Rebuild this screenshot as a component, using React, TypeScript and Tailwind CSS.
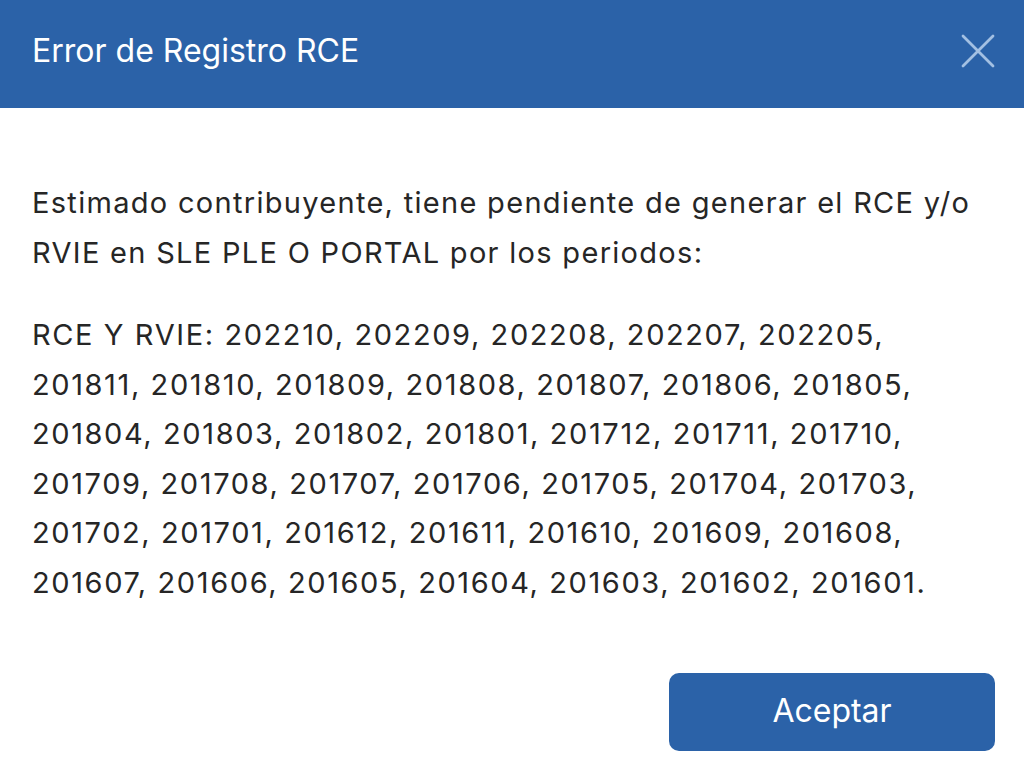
import React from 'react';

const periodLines = [
  'RCE Y RVIE: 202210, 202209, 202208, 202207, 202205,',
  '201811, 201810, 201809, 201808, 201807, 201806, 201805,',
  '201804, 201803, 201802, 201801, 201712, 201711, 201710,',
  '201709, 201708, 201707, 201706, 201705, 201704, 201703,',
  '201702, 201701, 201612, 201611, 201610, 201609, 201608,',
  '201607, 201606, 201605, 201604, 201603, 201602, 201601.',
];

export default function App() {
  return (
    <div className="w-[1024px] h-[771px] bg-white flex flex-col overflow-hidden font-['Inter','Roboto',sans-serif]">
      {/* Header */}
      <div className="h-[108px] bg-[#2b62a8] flex items-center justify-between pl-[32px] pr-[28px] shrink-0">
        <h1 className="text-white text-[32px] font-normal pb-[6px]">Error de Registro RCE</h1>
        <button className="w-[36px] h-[36px] flex items-center justify-center text-[#a3c0e3] mb-[6px]">
          <svg width="34" height="34" viewBox="0 0 34 34" fill="none" stroke="currentColor" strokeWidth="2.8" strokeLinecap="round">
            <path d="M2 2 L32 32 M32 2 L2 32" />
          </svg>
        </button>
      </div>

      {/* Body */}
      <div className="flex-1 flex flex-col px-[32px] pt-[70px] text-[#262626] text-[29px] leading-[49.5px]">
        <p className="whitespace-nowrap tracking-[1.3px]">
          Estimado contribuyente, tiene pendiente de generar el RCE y/o
          <br />
          RVIE en SLE PLE O PORTAL por los periodos:
        </p>
        <p className="mt-[33px] whitespace-nowrap tracking-[1.6px]">
          {periodLines.map((line, i) => (
            <React.Fragment key={i}>
              {line}
              {i < periodLines.length - 1 && <br />}
            </React.Fragment>
          ))}
        </p>

        <div className="flex justify-end mt-[66px] -mr-[3px]">
          <button className="w-[326px] h-[78px] rounded-[10px] bg-[#2b62a8] text-white text-[32px] pb-[2px]">
            Aceptar
          </button>
        </div>
      </div>
    </div>
  );
}
